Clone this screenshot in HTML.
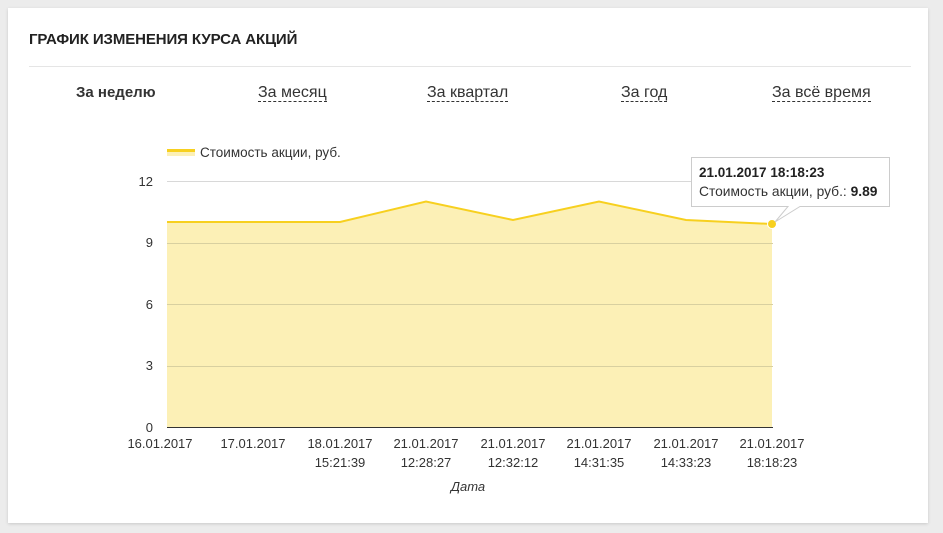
<!DOCTYPE html>
<html><head><meta charset="utf-8"><style>
body{margin:0;width:943px;height:533px;background:#ececec;font-family:"Liberation Sans",sans-serif;position:relative;overflow:hidden}
.card{position:absolute;left:8px;top:8px;width:920px;height:515px;background:#fff;box-shadow:0 1px 3px rgba(0,0,0,.15)}
.t{position:absolute;left:29px;top:31px;font-size:15px;font-weight:bold;color:#222;letter-spacing:-0.1px}
.hr{position:absolute;left:29px;right:32px;top:66px;height:1px;background:#e5e5e5}
.tab{position:absolute;top:84px;font-size:16px;color:#333;border-bottom:1px dashed #333;line-height:17px}
</style></head><body>
<div class="card"></div>
<div class="t">ГРАФИК ИЗМЕНЕНИЯ КУРСА АКЦИЙ</div>
<div class="hr"></div>
<div class="tab" style="left:76px;font-weight:bold;border:none;font-size:15px">За неделю</div>
<div class="tab" style="left:258px">За месяц</div>
<div class="tab" style="left:427px">За квартал</div>
<div class="tab" style="left:621px">За год</div>
<div class="tab" style="left:772px">За всё время</div>
<svg style="position:absolute;left:0;top:0" width="943" height="533" font-family="Liberation Sans" font-size="13" fill="#333">
<rect x="167" y="149" width="28" height="7" fill="#fcf0b6"/><rect x="167" y="149" width="28" height="3" fill="#f7d01f"/>
<text x="200" y="157" font-size="13.5">Стоимость акции, руб.</text>
<path d="M167,222L253,222L340,222L426,201.5L513,220L599,201.5L686,220L772,224L772,427L167,427Z" fill="#fcf0b6"/>
<g stroke="#d8d0a0"><line x1="167" x2="773" y1="243.5" y2="243.5"/><line x1="167" x2="773" y1="304.5" y2="304.5"/><line x1="167" x2="773" y1="366.5" y2="366.5"/></g>
<line x1="167" x2="773" y1="181.5" y2="181.5" stroke="#d8d8d8"/>
<g text-anchor="end"><text x="153" y="186">12</text><text x="153" y="247">9</text><text x="153" y="309">6</text><text x="153" y="370">3</text><text x="153" y="432">0</text></g>
<path d="M167,222L253,222L340,222L426,201.5L513,220L599,201.5L686,220L772,224" fill="none" stroke="#f7d01f" stroke-width="2"/>
<line x1="167" x2="773" y1="427.5" y2="427.5" stroke="#333"/>
<circle cx="772" cy="224" r="4.5" fill="#f7d01f" stroke="#fff" stroke-width="1"/>
<g text-anchor="middle">
<text x="160" y="448">16.01.2017</text><text x="253" y="448">17.01.2017</text>
<text x="340" y="448">18.01.2017</text><text x="340" y="467">15:21:39</text>
<text x="426" y="448">21.01.2017</text><text x="426" y="467">12:28:27</text>
<text x="513" y="448">21.01.2017</text><text x="513" y="467">12:32:12</text>
<text x="599" y="448">21.01.2017</text><text x="599" y="467">14:31:35</text>
<text x="686" y="448">21.01.2017</text><text x="686" y="467">14:33:23</text>
<text x="772" y="448">21.01.2017</text><text x="772" y="467">18:18:23</text>
<text x="468" y="491" font-style="italic">Дата</text></g>
<path d="M691.5,157.5H889.5V206.5H800L775,222L788,206.5H691.5Z" fill="#fff" stroke="#ccc"/>
<text x="699" y="177" font-weight="bold" fill="#222" font-size="13.5">21.01.2017 18:18:23</text>
<text x="699" y="196" font-size="13.8">Стоимость акции, руб.: <tspan font-weight="bold" fill="#222">9.89</tspan></text>
</svg>
</body></html>
